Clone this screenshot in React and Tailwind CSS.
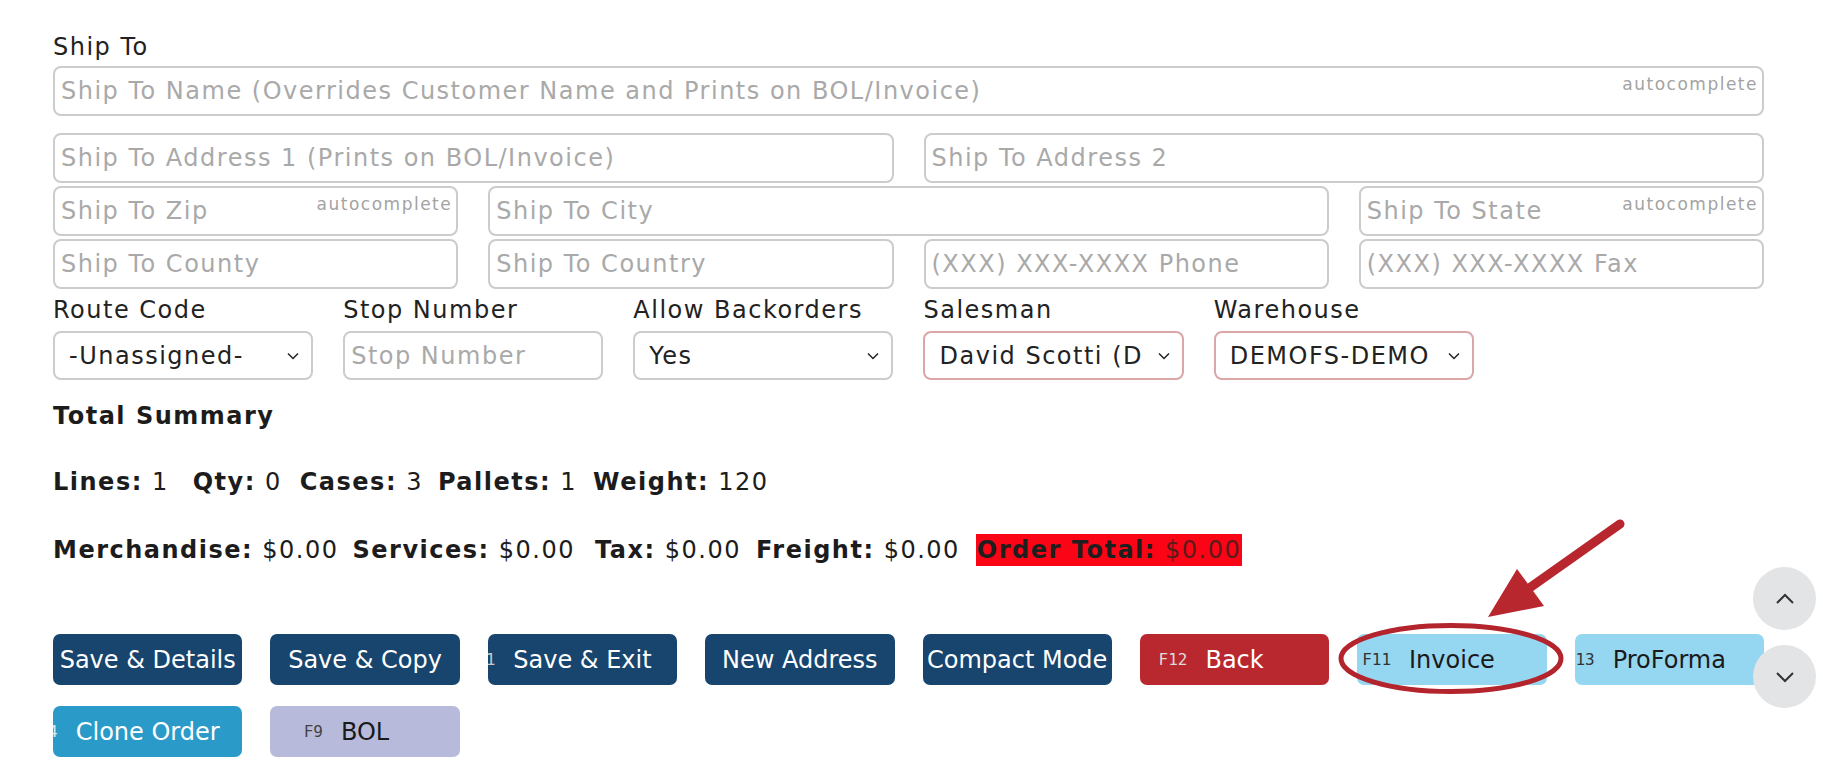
import React from 'react';

const font = { fontFamily: '"DejaVu Sans", Verdana, sans-serif' };

const Chevron = () => (
  <svg className="pointer-events-none absolute right-[14px] top-1/2 -translate-y-1/2" width="12" height="8" viewBox="0 0 12 8">
    <path d="M1 1.5 L6 6.5 L11 1.5" fill="none" stroke="#222" strokeWidth="1.5" />
  </svg>
);

const Field = ({ placeholder, auto, className = '' }) => (
  <div className={`relative ${className}`}>
    <input
      type="text"
      placeholder={placeholder}
      className="h-[50px] w-full rounded-[8px] border-2 border-[#cccccc] bg-white px-[6px] text-[24px] text-[#222] placeholder-[#a9a9a9] outline-none"
    />
    {auto && (
      <span className="pointer-events-none absolute right-[6px] top-[7px] text-[17px] leading-[22px] text-[#a3a3a3]">autocomplete</span>
    )}
  </div>
);

const SelectBox = ({ label, value, pink }) => (
  <div>
    <div className="text-[24px] leading-[28px] text-[#222]">{label}</div>
    <div className="relative mt-[7px]">
      <select
        defaultValue={value}
        className={`h-[49px] w-full appearance-none rounded-[8px] border-2 bg-white pl-[14px] pr-[30px] text-[24px] text-[#222] outline-none ${pink ? 'border-[#dba6a6]' : 'border-[#cccccc]'}`}
        style={font}
      >
        <option>{value}</option>
      </select>
      <Chevron />
    </div>
  </div>
);

const buttons = [
  { text: 'Save & Details', cls: 'bg-[#17456e] text-white' },
  { text: 'Save & Copy', cls: 'bg-[#17456e] text-white' },
  { text: 'Save & Exit', key: 'F1', cls: 'bg-[#17456e] text-white', keyCls: 'text-[#c9c9c9]' },
  { text: 'New Address', cls: 'bg-[#17456e] text-white' },
  { text: 'Compact Mode', cls: 'bg-[#17456e] text-white' },
  { text: 'Back', key: 'F12', cls: 'bg-[#b9272f] text-white', keyCls: 'text-[#dddddd]' },
  { text: 'Invoice', key: 'F11', cls: 'bg-[#95d7f1] text-[#1a1a1a]', keyCls: 'text-[#333]' },
  { text: 'ProForma', key: 'F13', cls: 'bg-[#95d7f1] text-[#1a1a1a]', keyCls: 'text-[#333]' },
  { text: 'Clone Order', key: 'F4', cls: 'bg-[#2a9bc8] text-white', keyCls: 'text-[#d5ecf6]' },
  { text: 'BOL', key: 'F9', cls: 'bg-[#b8badc] text-[#1a1a1a]', keyCls: 'text-[#444]' },
];

const Stat = ({ label, value, className = '' }) => (
  <span className={className}>
    <b className="font-bold">{label}</b> {value}
  </span>
);

export default function App() {
  return (
    <div className="relative min-h-screen overflow-hidden bg-white tracking-[1.5px] text-[#1c1c1c]" style={font}>
      <div className="pl-[53px] pr-[59px] pt-[33px]">
        <div className="text-[24px] leading-[28px] text-[#222]">Ship To</div>
        <Field className="mt-[5px]" placeholder="Ship To Name (Overrides Customer Name and Prints on BOL/Invoice)" auto />

        <div className="mt-[17px] grid grid-cols-4 gap-x-[30px] gap-y-[3px]">
          <Field className="col-span-2" placeholder="Ship To Address 1 (Prints on BOL/Invoice)" />
          <Field className="col-span-2" placeholder="Ship To Address 2" />
          <Field placeholder="Ship To Zip" auto />
          <Field className="col-span-2" placeholder="Ship To City" />
          <Field placeholder="Ship To State" auto />
          <Field placeholder="Ship To County" />
          <Field placeholder="Ship To Country" />
          <Field placeholder="(XXX) XXX-XXXX Phone" />
          <Field placeholder="(XXX) XXX-XXXX Fax" />
        </div>

        <div className="mt-[7px] grid grid-cols-6 gap-x-[30px]">
          <SelectBox label="Route Code" value="-Unassigned-" />
          <div>
            <div className="text-[24px] leading-[28px] text-[#222]">Stop Number</div>
            <input
              type="text"
              placeholder="Stop Number"
              className="mt-[7px] h-[49px] w-full rounded-[8px] border-2 border-[#cccccc] bg-white px-[6px] text-[24px] placeholder-[#a9a9a9] outline-none"
            />
          </div>
          <SelectBox label="Allow Backorders" value="Yes" />
          <SelectBox label="Salesman" value="David Scotti (D" pink />
          <SelectBox label="Warehouse" value="DEMOFS-DEMO" pink />
        </div>

        <div className="mt-[22px] text-[24px] font-bold leading-[28px]">Total Summary</div>

        <div className="mt-[38px] flex text-[24px] leading-[28px]">
          <Stat label="Lines:" value="1" className="mr-[24px]" />
          <Stat label="Qty:" value="0" className="mr-[18px]" />
          <Stat label="Cases:" value="3" className="mr-[15px]" />
          <Stat label="Pallets:" value="1" className="mr-[16px]" />
          <Stat label="Weight:" value="120" />
        </div>

        <div className="mt-[38px] flex items-center text-[24px] leading-[32px]">
          <Stat label="Merchandise:" value="$0.00" className="mr-[14px]" />
          <Stat label="Services:" value="$0.00" className="mr-[20px]" />
          <Stat label="Tax:" value="$0.00" className="mr-[15px]" />
          <Stat label="Freight:" value="$0.00" className="mr-[16px]" />
          <span className="bg-[#fa0416] px-[1px] text-[#1e1e1e]">
            <b className="font-bold">Order Total:</b> <span className="text-[#5e1a1a]">$0.00</span>
          </span>
        </div>

        <div className="mt-[68px] grid grid-cols-8 gap-x-[28px] gap-y-[21px] pb-[20px] tracking-normal">
          {buttons.map((b) => (
            <button
              key={b.text}
              className={`relative flex h-[51px] items-center justify-center overflow-hidden rounded-[7px] text-[24px] ${b.cls}`}
              style={font}
            >
              <span className="relative whitespace-nowrap">
                {b.key && (
                  <span
                    className={`absolute right-full top-[6px] mr-[18px] text-[16px] ${b.keyCls}`}
                    style={{ fontFamily: '"DejaVu Sans Mono", monospace' }}
                  >
                    {b.key}
                  </span>
                )}
                {b.text}
              </span>
            </button>
          ))}
        </div>
      </div>

      {/* scroll buttons */}
      <button className="absolute left-[1753px] top-[567px] flex h-[63px] w-[63px] items-center justify-center rounded-full bg-[#e3e4e6]">
        <svg width="20" height="12" viewBox="0 0 20 12">
          <path d="M2 10 L10 2 L18 10" fill="none" stroke="#333" strokeWidth="2" />
        </svg>
      </button>
      <button className="absolute left-[1753px] top-[645px] flex h-[63px] w-[63px] items-center justify-center rounded-full bg-[#e3e4e6]">
        <svg width="20" height="12" viewBox="0 0 20 12">
          <path d="M2 2 L10 10 L18 2" fill="none" stroke="#333" strokeWidth="2" />
        </svg>
      </button>

      {/* annotation */}
      <svg className="pointer-events-none absolute left-0 top-0" width="1823" height="779">
        <ellipse cx="1451" cy="658.5" rx="110" ry="33" fill="none" stroke="#b3242c" strokeWidth="5" />
        <line x1="1620" y1="524" x2="1528" y2="589" stroke="#b8262e" strokeWidth="9" strokeLinecap="round" />
        <polygon points="1488,617 1517,569 1544,606" fill="#b8262e" />
      </svg>
    </div>
  );
}
